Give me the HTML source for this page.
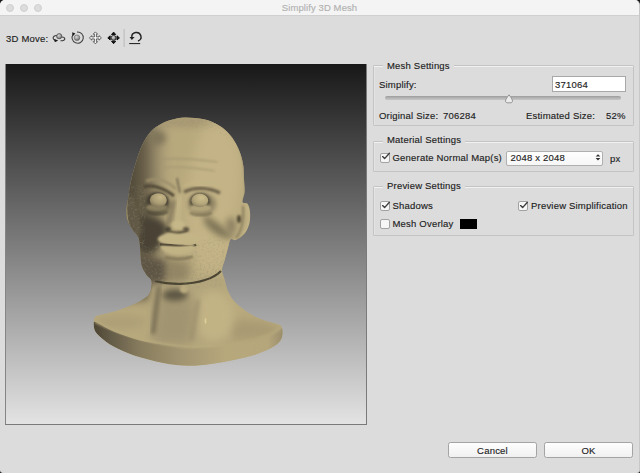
<!DOCTYPE html>
<html><head><meta charset="utf-8">
<style>
html,body{margin:0;padding:0;width:640px;height:473px;overflow:hidden;background:#1a1a1a;}
*{box-sizing:border-box;}
body{font-family:"Liberation Sans",sans-serif;font-size:9.5px;color:#1e1e1e;letter-spacing:0.2px;-webkit-text-stroke:0.15px #1e1e1e;}
.win{position:absolute;left:0;top:0;width:640px;height:473px;background:#dcdcdc;border-radius:5px 5px 3px 3px;overflow:hidden;border-right:1px solid #c8c8c8;}
.title{position:absolute;left:0;top:0;width:640px;height:16px;background:#f4f4f4;border-bottom:1px solid #d0d0d0;}
.tl{position:absolute;top:3.5px;width:8px;height:8px;border-radius:50%;background:#dcdcdc;border:0.5px solid #cfcfcf;}
.ttext{position:absolute;left:-0.5px;width:640px;top:1.7px;text-align:center;color:#b0b0b0;font-size:9.5px;letter-spacing:0.1px;-webkit-text-stroke:0.15px #b4b4b4;line-height:12px;}
.abs{position:absolute;white-space:nowrap;line-height:12px;margin-top:-0.3px;}
.canvas{position:absolute;left:5px;top:64px;width:362px;height:361px;background:linear-gradient(#181818,#7c7c7c 50%,#e3e3e3);border-right:1px solid #7a7a7a;border-bottom:1px solid #7a7a7a;border-left:1px solid #858585;}
.group{position:absolute;border:1px solid #c4c4c4;border-radius:1px;box-shadow:inset 0 1px 0 rgba(255,255,255,0.6),inset 1px 0 0 rgba(255,255,255,0.2);}
.glabel{position:absolute;background:#dcdcdc;padding:0 4px;line-height:12px;white-space:nowrap;margin-top:-0.3px;}
.cb{position:absolute;width:10px;height:10px;background:#f6f6f6;border:1px solid #a2a2a2;border-radius:2px;}
.ck{position:absolute;width:12px;height:12px;overflow:visible;}
.btn{position:absolute;height:16px;background:linear-gradient(#fefefe,#f0f0f0);border:1px solid #a4a4a4;border-radius:2.5px;text-align:center;line-height:15px;}
</style></head><body>
<div class="win">
  <div class="title">
    <div class="tl" style="left:5.5px"></div>
    <div class="tl" style="left:19.5px"></div>
    <div class="tl" style="left:33.5px"></div>
    <div class="ttext">Simplify 3D Mesh</div>
  </div>
  <div class="abs" style="left:6px;top:33.5px;">3D Move:</div>
<svg width="150" height="20" viewBox="0 0 150 20" style="position:absolute;left:0;top:28px;">
<defs>
<radialGradient id="ball" cx="0.4" cy="0.35" r="0.7"><stop offset="0" stop-color="#d8d8d8"/><stop offset="0.6" stop-color="#9a9a9a"/><stop offset="1" stop-color="#5a5a5a"/></radialGradient>
</defs>
<!-- icon1 orbit: y offset 28 -->
<path d="M56.5 12.6 C53 12 52.3 9.5 54 8.3 C55.5 7.3 57 7.5 58 8" stroke="#3a3a3a" stroke-width="1.1" fill="none"/>
<path d="M60.5 12.8 C63.5 12.8 65 11.8 64.8 10.6 C64.6 9.5 63.5 9 62 9" stroke="#3a3a3a" stroke-width="1.1" fill="none"/>
<circle cx="59.2" cy="8.2" r="2.6" fill="url(#ball)" stroke="#444" stroke-width="0.7"/>
<path d="M54.2 11 L58.2 12.6 L54.8 14.2Z" fill="#1a1a1a"/>
<!-- icon2 roll -->
<path d="M73.2 6.3 A5.6 5.6 0 1 0 77 4.1" stroke="#4a4a4a" stroke-width="1.1" fill="none"/>
<path d="M72.2 4.2 L75.4 5.4 L72.6 8.2Z" fill="#1a1a1a"/>
<circle cx="77" cy="9.7" r="2.8" fill="url(#ball)" stroke="#666" stroke-width="0.6"/>
<!-- icon3 pan outline cross -->
<path d="M94.40 8.90 L94.40 6.20 L93.20 6.20 L95.40 3.90 L97.60 6.20 L96.40 6.20 L96.40 8.90 L99.10 8.90 L99.10 7.70 L101.40 9.90 L99.10 12.10 L99.10 10.90 L96.40 10.90 L96.40 13.60 L97.60 13.60 L95.40 15.90 L93.20 13.60 L94.40 13.60 L94.40 10.90 L91.70 10.90 L91.70 12.10 L89.40 9.90 L91.70 7.70 L91.70 8.90Z" fill="#f8f8f8" stroke="#4a4a4a" stroke-width="0.85" stroke-linejoin="round"/>
<!-- icon4 slide -->
<path d="M113.60 4.10 L115.70 6.50 L111.50 6.50Z M119.40 9.90 L117.00 12.00 L117.00 7.80Z M113.60 15.70 L111.50 13.30 L115.70 13.30Z M107.80 9.90 L110.20 7.80 L110.20 12.00Z" fill="#111" stroke="#111" stroke-width="1" stroke-linejoin="round"/>
<circle cx="113.6" cy="9.9" r="2.5" fill="url(#ball)" stroke="#1a1a1a" stroke-width="0.8"/>
<!-- separator -->
<rect x="123.6" y="1" width="1" height="18" fill="#b9b9b9"/>
<!-- reset -->
<path d="M131.8 9.2 A4.6 4.4 0 1 1 138 13" stroke="#222" stroke-width="1.4" fill="none"/>
<path d="M129.6 8.9 L134.6 8.9 L131.8 12Z" fill="#222"/>
<rect x="129.2" y="15" width="11" height="1.1" fill="#2a2a2a"/>
</svg>

  <div class="canvas"></div>
<svg class="head" width="640" height="473" viewBox="0 0 640 473" style="position:absolute;left:0;top:0;"><defs>
<clipPath id="sc"><path d="M185.0 117.5 C190.5 117.4 198.4 118.3 203.5 119.3 C208.6 120.3 211.7 121.7 215.4 123.5 C219.1 125.3 222.4 127.5 225.5 130.3 C228.6 133.1 231.6 136.7 234.0 140.4 C236.4 144.1 238.3 148.1 239.9 152.3 C241.5 156.5 242.6 161.0 243.3 165.8 C244.0 170.6 243.9 176.6 244.1 181.0 C244.3 185.4 244.9 188.5 244.6 192.0 C244.3 195.5 242.0 200.1 242.5 202.0 C243.0 203.9 246.2 202.0 247.5 203.7 C248.8 205.4 249.7 208.6 250.0 212.0 C250.3 215.4 250.2 220.3 249.2 224.0 C248.2 227.7 246.3 231.4 244.1 234.1 C241.8 236.8 237.9 239.2 235.7 240.0 C233.4 240.8 231.9 237.9 230.6 239.2 C229.3 240.5 229.0 244.2 228.0 247.7 C227.0 251.2 225.7 256.3 224.7 260.0 C223.7 263.7 221.9 266.5 222.0 270.0 C222.1 273.5 224.0 277.4 225.0 281.0 C226.0 284.6 226.3 287.8 228.1 291.4 C229.9 295.0 231.9 299.0 235.7 302.8 C239.5 306.6 245.8 311.3 250.9 314.3 C256.0 317.3 261.4 319.2 266.1 320.9 C270.9 322.6 276.7 323.3 279.4 324.7 C282.1 326.1 282.0 327.1 282.3 329.5 C282.6 331.9 282.8 336.1 281.4 339.0 C280.0 341.9 277.8 344.1 273.7 346.6 C269.6 349.1 263.2 352.0 256.6 354.2 C250.0 356.4 241.4 358.3 233.8 359.9 C226.2 361.5 218.6 363.0 211.0 364.0 C203.4 365.0 196.0 366.0 188.0 365.8 C180.0 365.6 172.0 364.7 163.0 363.0 C154.0 361.3 142.2 358.2 134.0 355.5 C125.8 352.8 119.1 349.7 113.5 346.6 C107.9 343.5 103.4 339.9 100.2 337.0 C97.0 334.1 95.5 332.2 94.5 329.4 C93.5 326.6 93.8 322.2 94.1 320.0 C94.4 317.8 94.1 317.2 96.4 316.1 C98.7 315.0 103.4 314.6 107.8 313.3 C112.2 312.0 117.6 310.6 123.0 308.5 C128.4 306.4 135.8 303.4 140.2 300.9 C144.6 298.4 147.8 296.6 149.7 293.3 C151.6 290.0 152.2 284.1 151.6 281.0 C151.0 277.9 148.0 277.1 146.3 274.4 C144.6 271.7 142.6 269.1 141.6 265.0 C140.6 260.9 140.8 254.6 140.3 250.0 C139.8 245.4 139.7 240.7 138.6 237.5 C137.5 234.3 135.3 233.5 133.5 230.7 C131.7 227.9 128.8 224.2 127.6 220.6 C126.4 216.9 126.2 212.8 126.4 208.8 C126.6 204.9 128.0 200.0 128.5 196.9 C129.0 193.8 128.9 192.7 129.3 190.0 C129.7 187.3 130.2 184.8 131.0 181.0 C131.8 177.2 133.1 172.0 134.4 167.5 C135.7 163.0 137.1 158.2 138.6 154.0 C140.1 149.8 141.7 145.8 143.7 142.1 C145.7 138.4 147.9 134.8 150.4 132.0 C152.9 129.2 155.5 127.2 158.9 125.2 C162.3 123.2 166.3 121.4 170.7 120.1 C175.0 118.8 179.5 117.6 185.0 117.5Z"/></clipPath>
<filter id="b05" x="-50%" y="-50%" width="200%" height="200%"><feGaussianBlur stdDeviation="0.5"/></filter>
<filter id="b1" x="-50%" y="-50%" width="200%" height="200%"><feGaussianBlur stdDeviation="1"/></filter>
<filter id="b2" x="-50%" y="-50%" width="200%" height="200%"><feGaussianBlur stdDeviation="2"/></filter>
<filter id="b3" x="-50%" y="-50%" width="200%" height="200%"><feGaussianBlur stdDeviation="3"/></filter>
<filter id="b5" x="-50%" y="-50%" width="200%" height="200%"><feGaussianBlur stdDeviation="5"/></filter>
<filter id="b6" x="-50%" y="-50%" width="200%" height="200%"><feGaussianBlur stdDeviation="6"/></filter>
<filter id="b8" x="-50%" y="-50%" width="200%" height="200%"><feGaussianBlur stdDeviation="8"/></filter>
<filter id="noise2" x="0" y="0" width="100%" height="100%"><feTurbulence type="fractalNoise" baseFrequency="0.6 0.35" numOctaves="2" seed="11"/><feColorMatrix values="0 0 0 0 0.85  0 0 0 0 0.78  0 0 0 0 0.58  0 0 0 -3 1.6"/><feComposite operator="in" in2="SourceGraphic"/></filter>
<filter id="noise" x="0" y="0" width="100%" height="100%"><feTurbulence type="fractalNoise" baseFrequency="0.45" numOctaves="3" seed="7"/><feColorMatrix values="0 0 0 0 0.30  0 0 0 0 0.28  0 0 0 0 0.20  0 0 0 -2.2 1.15"/><feComposite operator="in" in2="SourceGraphic"/></filter>
<radialGradient id="eyeg" cx="0.62" cy="0.3" r="0.8"><stop offset="0" stop-color="#c6b788"/><stop offset="0.55" stop-color="#ab9d74"/><stop offset="1" stop-color="#7a6f55"/></radialGradient>
<linearGradient id="leftg" x1="128" x2="172" y1="0" y2="0" gradientUnits="userSpaceOnUse"><stop offset="0" stop-color="#4e4636"/><stop offset="0.4" stop-color="#6a604a"/><stop offset="0.75" stop-color="#94886a" stop-opacity="0.6"/><stop offset="1" stop-color="#b8a97d" stop-opacity="0"/></linearGradient>
<radialGradient id="eyeg2" cx="0.6" cy="0.3" r="0.8"><stop offset="0" stop-color="#cdbe8e"/><stop offset="0.55" stop-color="#b6a87b"/><stop offset="1" stop-color="#857a5c"/></radialGradient>
<filter id="b4" x="-50%" y="-50%" width="200%" height="200%"><feGaussianBlur stdDeviation="4"/></filter>
<linearGradient id="baseg" x1="94" x2="283" y1="0" y2="0" gradientUnits="userSpaceOnUse"><stop offset="0" stop-color="#4d4634"/><stop offset="0.1" stop-color="#675e4a"/><stop offset="0.25" stop-color="#887d5e"/><stop offset="0.45" stop-color="#a09370"/><stop offset="0.7" stop-color="#b7a87c"/><stop offset="0.92" stop-color="#b5a67b"/><stop offset="1" stop-color="#9a8d6b"/></linearGradient>
</defs>
<g clip-path="url(#sc)">
<rect x="80" y="100" width="220" height="280" fill="#b8a97d"/>
<!-- left side darkening (head) -->
<path d="M120 110 L165 110 C172 150 170 200 168 240 C166 270 170 290 178 300 L120 300Z" fill="url(#leftg)" filter="url(#b5)"/>
<path d="M138 250 C150 255 165 258 192 262 C190 275 188 285 185 292 L140 292Z" fill="#8a7e5e" filter="url(#b4)" opacity="0.8"/>
<path d="M136 250 C145 255 155 258 165 262 C165 275 165 285 162 292 L136 292Z" fill="#5e5544" filter="url(#b3)"/>
<ellipse cx="212" cy="215" rx="26" ry="62" fill="#c4b486" filter="url(#b8)"/>
<ellipse cx="240" cy="330" rx="40" ry="10" fill="#a89a72" filter="url(#b5)"/>
<ellipse cx="157" cy="138" rx="9" ry="7" fill="#80765a" filter="url(#b3)"/>
<!-- top of head slightly darker -->
<ellipse cx="188" cy="122" rx="40" ry="6" fill="#a89a73" filter="url(#b3)"/>
<!-- right side edge darker -->
<ellipse cx="218" cy="165" rx="24" ry="45" fill="#c3b386" filter="url(#b6)"/>
<path d="M238 140 C243 158 245 180 245 202 L252 202 L252 135Z" fill="#a09370" filter="url(#b1)"/>
<!-- hair texture -->
<path d="M148.0 128.0 C151.2 124.7 158.8 121.8 165.0 120.0 C171.2 118.2 178.3 117.1 185.0 117.0 C191.7 116.9 198.8 117.7 205.0 119.5 C211.2 121.3 217.5 124.9 222.0 128.0 C226.5 131.1 232.3 137.0 232.0 138.0 C231.7 139.0 225.3 135.7 220.0 134.0 C214.7 132.3 206.7 129.3 200.0 128.0 C193.3 126.7 186.7 125.7 180.0 126.0 C173.3 126.3 165.7 127.7 160.0 130.0 C154.3 132.3 148.0 140.3 146.0 140.0 C144.0 139.7 144.8 131.3 148.0 128.0Z" fill="#000" filter="url(#noise)" opacity="0.3"/>
<!-- forehead wrinkles -->
<path d="M158 160 C172 157 195 159 218 162" stroke="#a29571" stroke-width="1.2" fill="none" filter="url(#b1)"/>
<path d="M160 168 C175 166 198 168 215 171" stroke="#a59873" stroke-width="1.2" fill="none" filter="url(#b1)"/>
<!-- brows -->
<path d="M143 187 C152 184 164 188 174 196" stroke="#4f4736" stroke-width="3" fill="none" filter="url(#b1)"/>
<path d="M184 192 C194 187 208 187 220 193" stroke="#6b6149" stroke-width="3.2" fill="none" filter="url(#b1)"/>
<path d="M146 181 C156 177 167 181 176 189" stroke="#9c8f6b" stroke-width="2.5" fill="none" filter="url(#b1)"/>
<path d="M184 186 C194 180 208 180 220 186" stroke="#c4b587" stroke-width="2" fill="none" filter="url(#b1)"/>
<path d="M177 178 C178 184 179 188 180 193" stroke="#6f6650" stroke-width="1.6" fill="none" filter="url(#b1)"/>
<!-- eye sockets -->
<ellipse cx="156" cy="204" rx="14" ry="11" fill="#5a5241" filter="url(#b2)"/>
<ellipse cx="202" cy="204" rx="14" ry="11" fill="#8f8463" filter="url(#b2)"/>
<ellipse cx="157.5" cy="201" rx="10.5" ry="8.5" fill="#453e30" filter="url(#b1)"/>
<ellipse cx="200" cy="201.5" rx="10.5" ry="8.5" fill="#5a5240" filter="url(#b1)"/>
<ellipse cx="157" cy="207.5" rx="11" ry="4" fill="#8a7f5f" filter="url(#b1)"/>
<ellipse cx="200.5" cy="208" rx="11" ry="4" fill="#b2a47a" filter="url(#b1)"/>
<path d="M147 212 C152 215 162 215 168 212" stroke="#4e4736" stroke-width="1.5" fill="none" filter="url(#b1)"/>
<path d="M190 213 C196 216 206 216 212 213" stroke="#6e6449" stroke-width="1.5" fill="none" filter="url(#b1)"/>
<ellipse cx="158.3" cy="200.1" rx="8.6" ry="6.8" fill="url(#eyeg)" filter="url(#b05)"/>
<ellipse cx="199.8" cy="200.5" rx="8.4" ry="6.8" fill="url(#eyeg2)" filter="url(#b05)"/>
<!-- nose -->
<path d="M180 196 C178 207 177 216 177 224" stroke="#c3b486" stroke-width="7" fill="none" filter="url(#b2)"/>
<path d="M174 200 C172 210 170 218 169 224" stroke="#6e6550" stroke-width="3" fill="none" filter="url(#b2)"/>
<ellipse cx="178" cy="225" rx="7" ry="4.5" fill="#c6b788" filter="url(#b1)"/>
<path d="M166 230 C172 234 182 234 188 230" stroke="#4a4333" stroke-width="2.6" fill="none" filter="url(#b1)"/>
<ellipse cx="168" cy="229" rx="3" ry="2" fill="#4e4736" filter="url(#b1)"/>
<ellipse cx="186" cy="229" rx="3" ry="2" fill="#5e5642" filter="url(#b1)"/>
<!-- left cheek dark -->
<path d="M140 214 C150 216 164 218 168 228 C165 240 158 250 150 255 L138 250Z" fill="#4a4334" filter="url(#b3)"/>
<!-- right cheek fold shadow -->
<path d="M204 214 C214 220 226 228 234 238 C222 240 210 232 204 222Z" fill="#7e7457" filter="url(#b3)"/>
<ellipse cx="231" cy="226" rx="5" ry="9" fill="#8c8062" filter="url(#b3)"/>
<!-- beard light part -->
<path d="M140.5 240.0 C141.9 236.8 146.8 245.5 150.0 246.0 C153.2 246.5 155.7 244.0 160.0 243.0 C164.3 242.0 170.2 240.3 176.0 240.0 C181.8 239.7 189.0 241.3 195.0 241.0 C201.0 240.7 207.2 239.5 212.0 238.0 C216.8 236.5 221.8 230.0 224.0 232.0 C226.2 234.0 225.3 244.3 225.0 250.0 C224.7 255.7 223.8 262.0 222.0 266.0 C220.2 270.0 217.7 271.5 214.0 274.0 C210.3 276.5 204.8 279.3 200.0 281.0 C195.2 282.7 190.0 283.4 185.0 284.0 C180.0 284.6 174.7 284.8 170.0 284.5 C165.3 284.2 160.8 283.6 157.0 282.0 C153.2 280.4 149.6 277.8 147.0 275.0 C144.4 272.2 142.7 270.8 141.6 265.0 C140.5 259.2 139.1 243.2 140.5 240.0Z" fill="#000" filter="url(#noise)" opacity="0.35"/>
<!-- lips -->
<path d="M158.0 238.0 C159.0 236.3 164.7 233.7 168.0 233.0 C171.3 232.3 174.3 234.0 178.0 234.0 C181.7 234.0 186.3 232.5 190.0 233.0 C193.7 233.5 199.0 235.3 200.0 237.0 C201.0 238.7 199.7 241.7 196.0 243.0 C192.3 244.3 183.7 245.0 178.0 245.0 C172.3 245.0 165.3 244.2 162.0 243.0 C158.7 241.8 157.0 239.7 158.0 238.0Z" fill="#c4b587" filter="url(#b1)"/>
<path d="M160 244.5 C168 245.5 176 245.5 183 246 C190 246.5 195 245.5 196 244.5" stroke="#4a4333" stroke-width="2.3" fill="none" filter="url(#b05)"/>
<path d="M161.0 246.0 C162.8 245.0 171.5 246.7 177.0 246.5 C182.5 246.3 191.8 244.1 194.0 245.0 C196.2 245.9 192.7 250.3 190.0 252.0 C187.3 253.7 182.0 254.9 178.0 255.0 C174.0 255.1 168.8 254.0 166.0 252.5 C163.2 251.0 159.2 247.0 161.0 246.0Z" fill="#c2b385" filter="url(#b1)"/>
<path d="M165 257.5 C175 259.5 185 259.5 193 256.5" stroke="#7a7053" stroke-width="2" fill="none" filter="url(#b1)"/>
<!-- left ear -->
<path d="M126 198 C124 210 125 225 134 236 C138 238 141 236 141 230 C139 220 137 205 133 195Z" fill="#615845" filter="url(#b1)"/>
<path d="M127 200 C125 212 127 226 134 234" stroke="#a09370" stroke-width="1.6" fill="none" filter="url(#b05)"/>
<path d="M122 185 L145 185 L145 245 L122 245Z" fill="#000" filter="url(#noise)" opacity="0.35"/>
<!-- right ear -->
<path d="M246 205 C250 212 250 225 244 234" stroke="#c6b788" stroke-width="2" fill="none" filter="url(#b1)"/>
<path d="M243 206 C244 220 241 232 236 238" stroke="#8a7f5e" stroke-width="2" fill="none" filter="url(#b1)"/>
<ellipse cx="239" cy="219" rx="2" ry="4" fill="#4f4836" filter="url(#b1)"/>
<!-- neck -->
<path d="M150 284 L226 276 L232 345 L150 345Z" fill="#b3a57b" filter="url(#b3)"/>
<ellipse cx="214" cy="316" rx="20" ry="26" fill="#c2b385" filter="url(#b5)"/>
<path d="M158 296 C170 300 185 302 196 300 C195 315 193 330 190 345 L152 345 C155 330 157 312 158 296Z" fill="#a19471" filter="url(#b6)"/>
<ellipse cx="175" cy="295" rx="13" ry="6" fill="#5c5443" filter="url(#b3)"/>
<ellipse cx="184" cy="289" rx="4" ry="4" fill="#b9ab7f" filter="url(#b1)"/>
<path d="M159 286 C157 300 155 318 153 334" stroke="#71674f" stroke-width="4" fill="none" filter="url(#b2)"/>
<path d="M198 300 C196 312 194 326 191 340" stroke="#9a8d6b" stroke-width="3" fill="none" filter="url(#b2)"/>
<ellipse cx="205.5" cy="321" rx="1" ry="3" fill="#dccd99" filter="url(#b05)"/>
<ellipse cx="120" cy="322" rx="26" ry="7" fill="#ad9f77" filter="url(#b4)"/>
<!-- beard bottom dark line -->
<path d="M155 281 C170 285 190 285 205 280 C212 278 216 276 221 271" stroke="#4a4433" stroke-width="2.2" fill="none" filter="url(#b05)"/>

<path d="M155 278 L222 268 L222 288 L155 290Z" fill="#000" filter="url(#noise)" opacity="0.25"/>
<!-- base front face -->
<path d="M93.5 321.5 C96.8 321.8 105.4 328.2 113.5 331.4 C121.6 334.6 132.5 338.5 142.0 340.9 C151.5 343.3 162.6 344.5 170.6 345.6 C178.6 346.7 182.0 347.4 190.0 347.6 C198.0 347.8 209.0 347.4 218.5 346.6 C228.0 345.8 239.1 344.4 247.0 342.8 C254.9 341.2 260.6 339.2 266.0 337.0 C271.4 334.8 276.6 330.8 279.4 329.5 C282.2 328.2 282.7 327.4 283.0 329.0 C283.3 330.6 282.9 336.1 281.4 339.0 C279.8 341.9 277.8 344.1 273.7 346.6 C269.6 349.1 263.2 352.0 256.6 354.2 C250.0 356.4 241.4 358.3 233.8 359.9 C226.2 361.5 218.6 363.0 211.0 364.0 C203.4 365.0 196.0 366.0 188.0 365.8 C180.0 365.6 172.0 364.7 163.0 363.0 C154.0 361.3 142.2 358.2 134.0 355.5 C125.8 352.8 119.1 349.7 113.5 346.6 C107.9 343.5 103.5 339.9 100.2 337.0 C97.0 334.1 95.1 332.0 94.0 329.4 C92.9 326.8 90.2 321.2 93.5 321.5Z" fill="url(#baseg)" filter="url(#b05)"/>
<path d="M95 322 C120 334 150 344 190 347.5 C230 347 260 340 281 329" stroke="#b8aa7e" stroke-width="1.5" fill="none" filter="url(#b1)"/>
</g></svg>

  <div class="group" style="left:373px;top:65px;width:261px;height:61px;"></div>
  <div class="glabel" style="left:383px;top:60px;">Mesh Settings</div>
  <div class="abs" style="left:379px;top:79px;">Simplify:</div>
  <div style="position:absolute;left:552px;top:76px;width:74px;height:16px;background:#fff;border:1px solid #a8a8a8;"></div>
  <div class="abs" style="left:555px;top:79px;">371064</div>
  <div style="position:absolute;left:385px;top:95.5px;width:236px;height:4px;background:linear-gradient(#9c9c9c,#b4b4b4 50%,#c6c6c6);border-radius:2px;"></div>
<svg style="position:absolute;left:503px;top:93px;" width="12" height="12" viewBox="0 0 12 12"><path d="M6 1.8 C7.5 3.8 9.5 6.5 9.5 8 C9.5 9.3 8.5 9.8 7.2 9.8 L4.8 9.8 C3.5 9.8 2.5 9.3 2.5 8 C2.5 6.5 4.5 3.8 6 1.8Z" fill="#ececec" stroke="#8c8c8c" stroke-width="0.9"/></svg>
  <div class="abs" style="left:379px;top:110px;">Original Size:</div>
  <div class="abs" style="left:443px;top:110px;">706284</div>
  <div class="abs" style="left:526px;top:110px;">Estimated Size:</div>
  <div class="abs" style="left:606px;top:110px;">52%</div>

  <div class="group" style="left:373px;top:141px;width:261px;height:31px;"></div>
  <div class="glabel" style="left:383px;top:134px;">Material Settings</div>
  <div class="cb" style="left:380px;top:152.5px;"></div><svg class="ck" style="left:380px;top:152px" viewBox="0 0 12 12"><path d="M2.6 4.6 L4.6 6.6 L9.4 1.2" stroke="#3c3c3c" stroke-width="1.35" fill="none" stroke-linecap="round" stroke-linejoin="round"/></svg>
  <div class="abs" style="left:392.5px;top:152px;">Generate Normal Map(s)</div>
  <div style="position:absolute;left:506px;top:150.5px;width:97px;height:15.5px;background:linear-gradient(#fff,#f6f6f6);border:1px solid #b0b0b0;border-radius:2px;"></div>
  <div class="abs" style="left:510.5px;top:152.5px;">2048 x 2048</div>
<svg style="position:absolute;left:595px;top:153px;" width="6" height="9" viewBox="0 0 6 9"><path d="M0.6 3.6 L3 1.2 L5.4 3.6Z M0.6 5 L3 7.4 L5.4 5Z" fill="#333"/></svg>
  <div class="abs" style="left:610px;top:153px;">px</div>

  <div class="group" style="left:373px;top:186px;width:261px;height:50px;"></div>
  <div class="glabel" style="left:383px;top:180px;">Preview Settings</div>
  <div class="cb" style="left:380px;top:201px;"></div><svg class="ck" style="left:380px;top:200.5px" viewBox="0 0 12 12"><path d="M2.6 4.6 L4.6 6.6 L9.4 1.2" stroke="#3c3c3c" stroke-width="1.35" fill="none" stroke-linecap="round" stroke-linejoin="round"/></svg>
  <div class="abs" style="left:392.5px;top:200px;">Shadows</div>
  <div class="cb" style="left:518px;top:201px;"></div><svg class="ck" style="left:518px;top:200.5px" viewBox="0 0 12 12"><path d="M2.6 4.6 L4.6 6.6 L9.4 1.2" stroke="#3c3c3c" stroke-width="1.35" fill="none" stroke-linecap="round" stroke-linejoin="round"/></svg>
  <div class="abs" style="left:531px;top:200px;">Preview Simplification</div>
  <div class="cb" style="left:380px;top:219px;"></div>
  <div class="abs" style="left:392.5px;top:218px;">Mesh Overlay</div>
  <div style="position:absolute;left:460px;top:219px;width:17px;height:10px;background:#000;"></div>

  <div class="btn" style="left:448px;top:442px;width:89px;">Cancel</div>
  <div class="btn" style="left:544px;top:442px;width:89px;">OK</div>
</div>
</body></html>
